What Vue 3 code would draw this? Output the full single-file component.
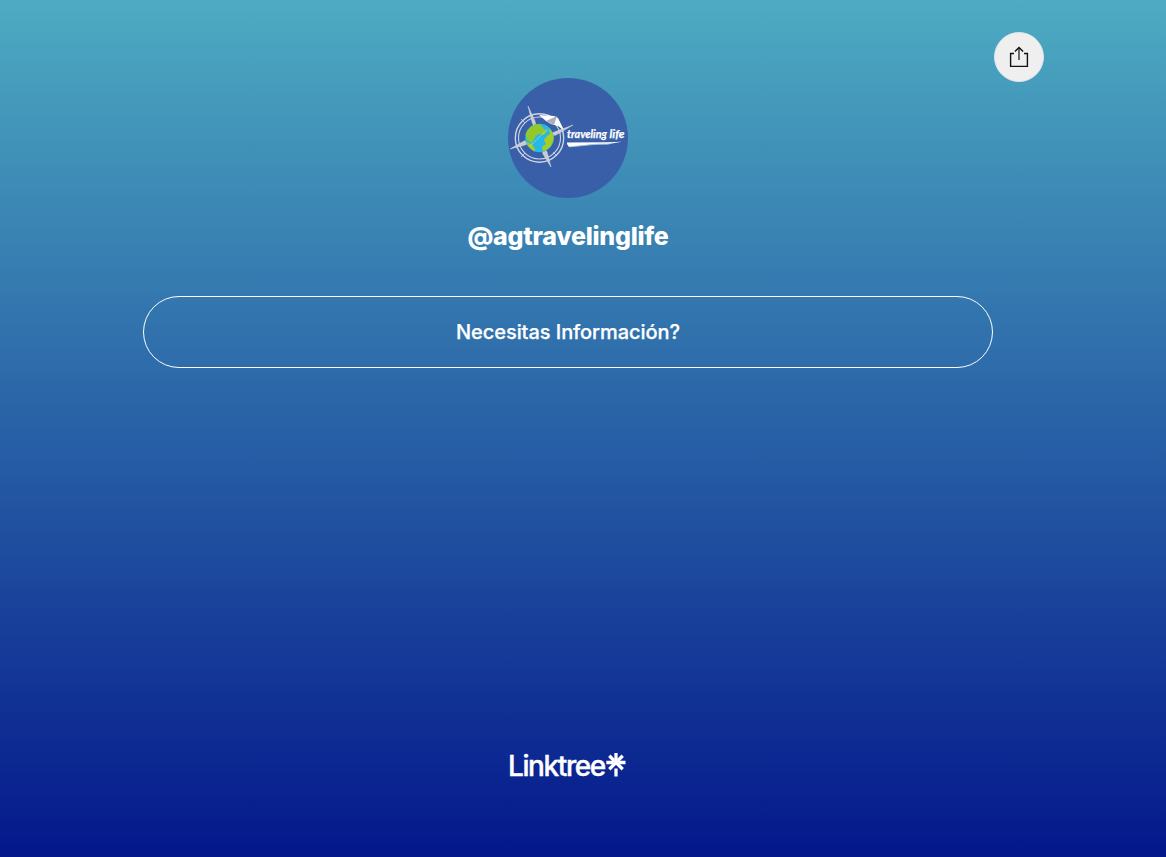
<script setup>
const handle = '@agtravelinglife'
const links = ['Necesitas Información?']
const rays = [45, 135]
</script>

<template>
  <main class="page">
    <button class="share" aria-label="Share">
      <svg width="20" height="22" viewBox="0 0 20 22" fill="none" stroke="#111" stroke-width="1.4">
        <path d="M5 7.5H1.6V20.4H18.4V7.5H15" />
        <path d="M5.9 5.6L10 1.6L14.1 5.6" />
        <path d="M10 14V2" stroke-width="1.2" />
      </svg>
    </button>
    <section class="profile">
      <svg class="avatar" viewBox="0 0 120 120" role="img" aria-label="Traveling life">
        <circle cx="60" cy="60" r="60" fill="#3a5fa9" />
        <g fill="none" stroke="#cdd5e5">
          <circle cx="31.5" cy="60" r="24.2" stroke-width="1.4" />
          <circle cx="31.5" cy="60" r="21" stroke-width="1.1" />
          <path d="M17 45l-4-4M45 74l4 4M17 75l-4 4" stroke-width=".8" />
        </g>
        <path d="M31 37L46 38L50 40L56 52L50 48L43 46L38 43Z" fill="#fff" />
        <path d="M38 43L49 38L46 47Z" fill="#a9afbd" />
        <path d="M20 28L27 43L30 58L24 44Z M43 89L35 76L31 60L39 74Z M2 71L16 63L31 60L17 67Z M65 47L49 53L31 60L48 57Z" fill="#c8cbd2" stroke="#e9edf3" stroke-width=".4" />
        <circle cx="31.5" cy="60" r="14.3" fill="#28b8e8" />
        <path d="M17.5 57Q20 47 30 46L33 47L36 51L39 53L36 57L32 56L29 57L26 61L24 65L19 62Z" fill="#91c82c" />
        <path d="M41 50Q46 55 45.7 61Q44 70 35 73.5L34 69L38 66L36 62L39 58L42 56Z M18 64L24 66L27 71L27 73.5Q20 70 18 64Z" fill="#a6cd22" />
        <path d="M22 68L40 51" fill="none" stroke="#d7e1b4" stroke-width=".8" stroke-dasharray="2 1" />
        <text class="script" x="59" y="60" textLength="40" lengthAdjust="spacingAndGlyphs">traveling</text>
        <text class="script" x="101.5" y="60" textLength="15" lengthAdjust="spacingAndGlyphs">life</text>
        <path d="M59 64.4L99 64.2L114 63.7L99 66.2L84 66.5L61 69L59 66Z" fill="#fff" />
        <path d="M62 68.8L91 66L101 66L105 64.6" fill="none" stroke="#a6cbd9" stroke-width=".8" />
      </svg>
      <h1>{{ handle }}</h1>
    </section>
    <nav>
      <a v-for="link in links" :key="link" class="link">{{ link }}</a>
    </nav>
    <footer class="brand">
      <span class="word">Linktree</span>
      <svg class="mark" width="20" height="24" viewBox="0 0 20 24" fill="none" stroke="#fff" stroke-width="3.3">
        <path v-for="angle in rays" :key="angle" d="M10 0V19" :transform="`rotate(${angle} 10 9.5)`" />
        <path d="M.3 9.5H19.5M10 .1V10M10 15.5V23.5" />
      </svg>
    </footer>
  </main>
</template>

<style>
html,
body {
  margin: 0;
  overflow: hidden;
}
</style>

<style scoped>
.page {
  position: relative;
  box-sizing: border-box;
  height: 857px;
  padding: 78px 30px 0 0;
  display: flex;
  flex-direction: column;
  align-items: center;
  background: linear-gradient(#4dabc2, #04178b);
  color: #fff;
  font-family: Inter, sans-serif;
}
.share {
  position: absolute;
  top: 32px;
  right: 122px;
  width: 50px;
  height: 50px;
  padding: 0;
  border: 1px solid #e0e4e6;
  border-radius: 50%;
  background: #efefef;
  display: grid;
  place-items: center;
}
.profile {
  display: flex;
  flex-direction: column;
  align-items: center;
}
.avatar {
  width: 120px;
  height: 120px;
}
.script {
  fill: #fff;
  stroke: #fff;
  stroke-width: 0.25;
  font: italic 700 12px Lato, cursive;
}
h1 {
  margin: 20px 0 0;
  font-size: 25px;
  line-height: 36px;
  font-weight: 800;
  letter-spacing: -0.26px;
}
nav {
  margin-top: 42px;
}
.link {
  box-sizing: border-box;
  width: 850px;
  height: 72px;
  border: 1px solid #fff;
  border-radius: 36px;
  display: flex;
  align-items: center;
  justify-content: center;
  font-size: 20px;
  font-weight: 500;
  letter-spacing: -0.06px;
  -webkit-text-stroke: 0.25px #fff;
}
.brand {
  margin-top: auto;
  margin-bottom: 76px;
  width: 120px;
  height: 30px;
  display: flex;
}
.word {
  width: 97.5px;
  font-size: 28px;
  line-height: 30px;
  font-weight: 500;
  letter-spacing: -1.4px;
  -webkit-text-stroke: 0.4px #fff;
}
.mark {
  flex: none;
  margin-top: 2px;
}
</style>
